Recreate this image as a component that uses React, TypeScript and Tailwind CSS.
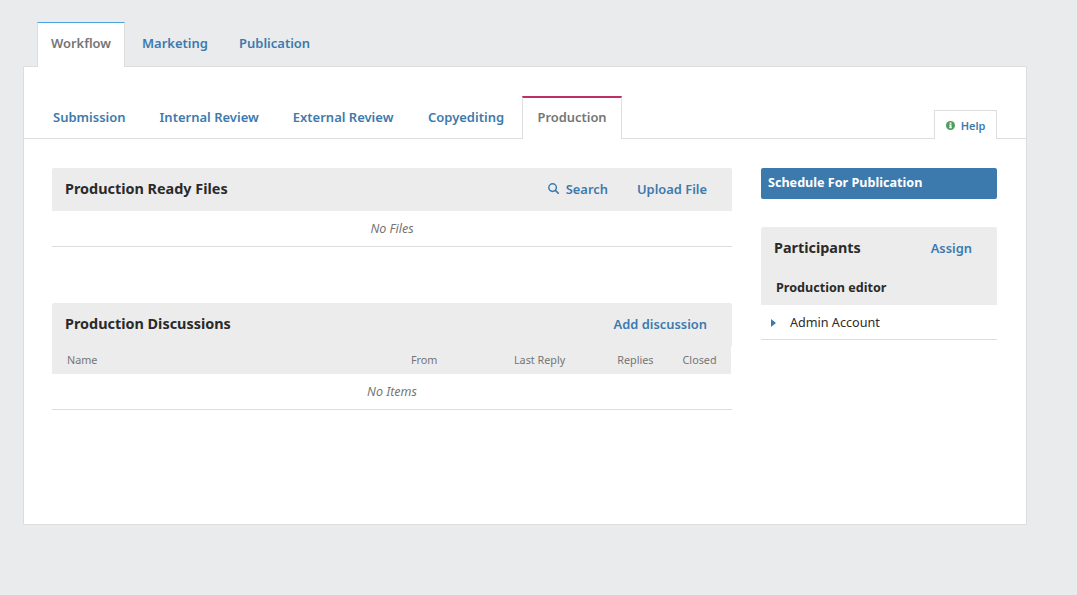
import React from 'react';

const font = "[font-family:'Noto_Sans',sans-serif]";

const TabLink: React.FC<{ children: React.ReactNode; className?: string }> = ({ children, className }) => (
  <span className={`text-[13px] leading-5 font-semibold text-[#3c7aae] ${className ?? ''}`}>{children}</span>
);

const SectionLink: React.FC<{ children: React.ReactNode; className?: string }> = ({ children, className }) => (
  <span className={`text-[12.9px] leading-5 font-semibold text-[#3c7aae] ${className ?? ''}`}>{children}</span>
);

const App: React.FC = () => {
  return (
    <div className={`${font} h-[595px] w-[1077px] overflow-hidden bg-[#eaebed] pt-[22px] pl-[23px]`}>
      {/* top tabs */}
      <div className="relative z-10 flex h-[45px] pl-[14px]">
        <div className="h-[45px] w-[88px] border-x border-t border-x-[#ddd] border-t-[#4ba3e0] bg-white pt-[10px] text-center text-[12.9px] leading-5 font-semibold text-[#757575]">
          Workflow
        </div>
        <TabLink className="mt-[11px] ml-[17px]">Marketing</TabLink>
        <TabLink className="mt-[11px] ml-[31px]">Publication</TabLink>
      </div>

      <div className="-mt-px h-[459px] w-[1004px] rounded-[1px] border border-[#ddd] bg-white">
        {/* stage tabs */}
        <div className="flex h-[72px] items-end border-b border-[#ddd] pl-[29px]">
          <TabLink className="mb-[11px]">Submission</TabLink>
          <TabLink className="mb-[11px] ml-[34px]">Internal Review</TabLink>
          <TabLink className="mb-[11px] ml-[34px]">External Review</TabLink>
          <TabLink className="mb-[11px] ml-[34.5px]">Copyediting</TabLink>
          <div className="relative -mb-px ml-[17.5px] h-[43px] w-[100px] border-x border-t-2 border-x-[#ddd] border-t-[#be2f66] bg-white pt-[9px] pl-px text-center text-[12.9px] leading-5 font-semibold text-[#757575]">
            Production
          </div>
          <div className="relative -mb-px ml-auto mr-[29px] flex h-[29px] w-[63px] items-center justify-center gap-[6px] border-x border-t border-[#ddd] bg-white pt-px">
            <svg width="9" height="9" viewBox="0 0 10 10" className="shrink-0">
              <circle cx="5" cy="5" r="5" fill="#4f9d5d" />
              <rect x="4.1" y="1.6" width="1.9" height="1.7" fill="#fff" />
              <rect x="3.5" y="4.1" width="2.6" height="1" fill="#fff" />
              <rect x="4.1" y="4.1" width="1.9" height="3.4" fill="#fff" />
              <rect x="3.5" y="7" width="3.2" height="1" fill="#fff" />
            </svg>
            <span className="text-[11px] leading-4 font-semibold text-[#3c7aae]">Help</span>
          </div>
        </div>

        <div className="flex items-start pt-[29px] pl-[28px]">
          {/* main column */}
          <div className="w-[680px]">
            <div className="flex h-[43px] items-center rounded-t-[2px] bg-[#ececec] pr-[25px] pb-[2px] pl-[13px]">
              <h2 className="text-[14.4px] leading-5 font-bold text-[#2a2a2a]">Production Ready Files</h2>
              <SectionLink className="ml-auto flex items-center gap-[7px]">
                <svg width="11" height="11" viewBox="0 0 11 11" fill="none" stroke="#3c7aae" strokeWidth="1.5" className="shrink-0">
                  <circle cx="4.6" cy="4.6" r="3.8" />
                  <path d="M7.4 7.4l3 3" strokeLinecap="round" />
                </svg>
                Search
              </SectionLink>
              <SectionLink className="ml-[29px]">Upload File</SectionLink>
            </div>
            <div className="flex h-[36px] items-center justify-center border-b border-[#ddd] pt-px text-[12.5px] text-[#757575] italic">
              No Files
            </div>

            <div className="mt-[56px] flex h-[43px] items-center rounded-t-[2px] bg-[#ececec] pr-[25px] pb-[2px] pl-[13px]">
              <h2 className="text-[14.4px] leading-5 font-bold text-[#2a2a2a]">Production Discussions</h2>
              <SectionLink className="ml-auto">Add discussion</SectionLink>
            </div>
            <div className="flex h-[28px] w-[679px] items-center bg-[#ececec] pt-px text-[10.8px] text-[#757575]">
              <span className="ml-[15px]">Name</span>
              <span className="ml-[313.5px]">From</span>
              <span className="ml-[76.5px]">Last Reply</span>
              <span className="ml-[52px]">Replies</span>
              <span className="ml-[29px]">Closed</span>
            </div>
            <div className="flex h-[36px] items-center justify-center border-b border-[#ddd] pt-px text-[12.5px] text-[#757575] italic">
              No Items
            </div>
          </div>

          {/* sidebar */}
          <div className="ml-[29px] w-[236px]">
            <div className="flex h-[31px] items-center rounded-[2px] bg-[#3c7aae] pb-px pl-[7px] text-[12.6px] font-bold text-white">
              Schedule For Publication
            </div>
            <div className="mt-[28px] h-[78px] rounded-t-[2px] bg-[#ececec]">
              <div className="flex items-center pt-[11px] pr-[25px] pl-[13px]">
                <h2 className="text-[14.4px] leading-5 font-bold text-[#2a2a2a]">Participants</h2>
                <SectionLink className="ml-auto">Assign</SectionLink>
              </div>
              <div className="mt-[20px] pl-[15px] text-[12.6px] leading-5 font-bold text-[#2a2a2a]">Production editor</div>
            </div>
            <div className="flex h-[35px] items-center border-b border-[#ddd] pt-[2px] pl-[10px] text-[12.6px] text-[#2a2a2a]">
              <svg width="5" height="8" viewBox="0 0 5 8" className="shrink-0">
                <path d="M0 0l5 4-5 4z" fill="#3c7aae" />
              </svg>
              <span className="ml-[14px]">Admin Account</span>
            </div>
          </div>
        </div>
      </div>
    </div>
  );
};

export default App;
